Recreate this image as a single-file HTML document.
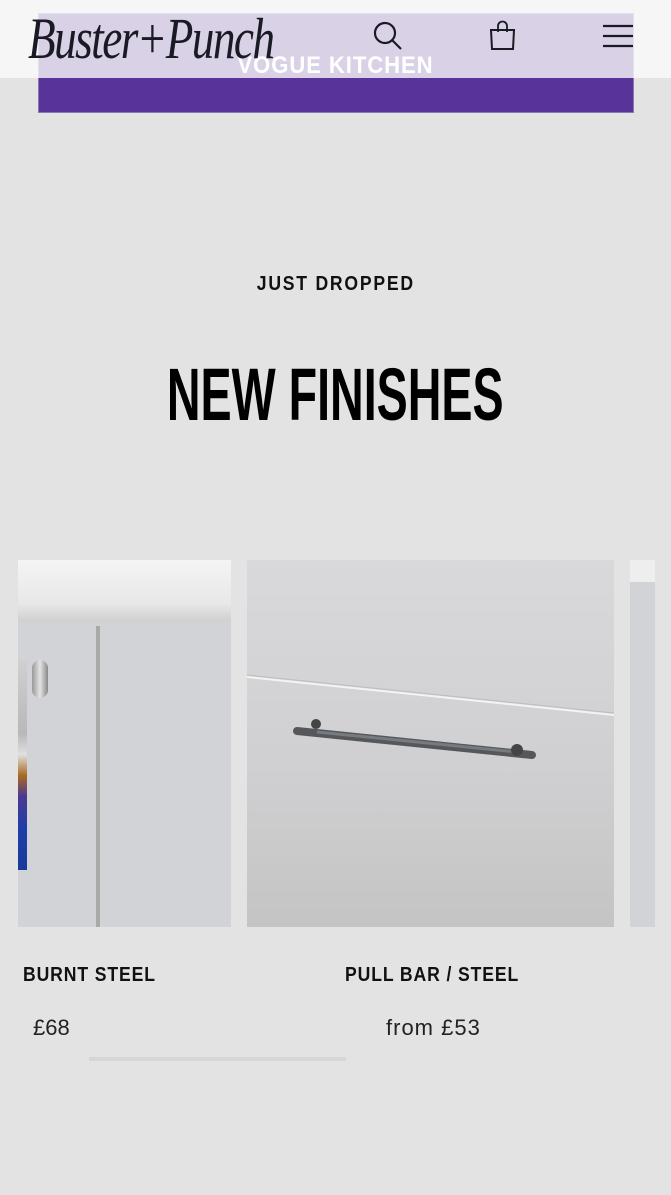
<!DOCTYPE html>
<html><head><meta charset="utf-8"><style>
*{margin:0;padding:0;box-sizing:border-box}
body{width:671px;height:1195px;overflow:hidden;background:#e3e3e3;font-family:"Liberation Sans",sans-serif;position:relative}
.abs{position:absolute}
</style></head><body>
<div class="abs" style="left:38px;top:13px;width:596px;height:100px;background:#58339a;border:1px solid #8a76b8"></div>
<div class="abs" style="left:0;top:0;width:671px;height:78px;background:rgba(250,250,250,0.8)"></div>
<div class="abs" style="left:0;top:52px;width:671px;text-align:center;color:#fff;font-weight:bold;font-size:24px;letter-spacing:1px"><span style="display:inline-block;transform:scaleX(0.92)">VOGUE KITCHEN</span></div>
<div class="abs" style="left:28px;top:4px;font-family:'Liberation Serif',serif;font-style:italic;font-size:58px;color:#1a1a24;transform:scaleX(0.78);transform-origin:left;letter-spacing:-2px;line-height:70px">Buster+Punch</div>
<svg class="abs" style="left:372px;top:20px" width="32" height="32" viewBox="0 0 32 32"><circle cx="13" cy="13" r="10" fill="none" stroke="#1a1a24" stroke-width="2.2"/><line x1="20" y1="20" x2="29" y2="29" stroke="#1a1a24" stroke-width="2.2"/></svg>
<svg class="abs" style="left:488px;top:20px" width="30" height="32" viewBox="0 0 30 32"><path d="M3 10H26L25 29H4Z" fill="none" stroke="#1a1a24" stroke-width="2"/><path d="M10 12V6a4.5 4.5 0 0 1 9 0V12" fill="none" stroke="#1a1a24" stroke-width="1.8"/></svg>
<svg class="abs" style="left:602px;top:24px" width="32" height="24" viewBox="0 0 32 24"><g stroke="#1a1a24" stroke-width="2.2"><line x1="1" y1="2" x2="31" y2="2"/><line x1="1" y1="12" x2="31" y2="12"/><line x1="1" y1="22" x2="31" y2="22"/></g></svg>
<div class="abs" style="left:0;top:273px;width:671px;text-align:center;font-size:20px;letter-spacing:2px;color:#111;font-weight:bold"><span style="display:inline-block;transform:scaleX(0.88)">JUST DROPPED</span></div>
<div class="abs" style="left:0;top:352px;width:671px;text-align:center"><span style="display:inline-block;font-weight:bold;font-size:74px;color:#000;transform:scaleX(0.63)">NEW FINISHES</span></div>
<!-- card 1 -->
<div class="abs" style="left:18px;top:560px;width:213px;height:367px;background:#d2d3d7;overflow:hidden">
<div class="abs" style="left:0;top:0;width:213px;height:62px;background:linear-gradient(#f4f4f4,#e8e8e8 70%,#cfcfcf)"></div>
<div class="abs" style="left:78px;top:66px;width:4px;height:301px;background:#a9a9a7"></div>
<div class="abs" style="left:14px;top:100px;width:16px;height:38px;border-radius:8px;background:linear-gradient(90deg,#999,#e4e4e4,#888)"></div>
<div class="abs" style="left:0;top:100px;width:9px;height:210px;background:linear-gradient(#d0d0d0 0%,#b8b8b8 35%,#e0e0e0 45%,#a86a20 55%,#4a3a90 65%,#1e3fa8 80%,#1a3a9a 100%)"></div>
</div>
<!-- card 2 -->
<div class="abs" style="left:247px;top:560px;width:367px;height:367px;background:linear-gradient(#d9d9db,#cfcfd1 60%,#c4c4c4);overflow:hidden">
<svg class="abs" style="left:0;top:0" width="367" height="367"><line x1="0" y1="117" x2="367" y2="155" stroke="#f3f3f3" stroke-width="2"/><line x1="0" y1="115" x2="367" y2="153" stroke="#bdbdbd" stroke-width="1"/>
<line x1="50" y1="171" x2="285" y2="195" stroke="#55575a" stroke-width="8" stroke-linecap="round"/><line x1="70" y1="172" x2="270" y2="192" stroke="#777a7e" stroke-width="3"/><circle cx="69" cy="164" r="5" fill="#444"/><circle cx="270" cy="190" r="6" fill="#444"/></svg>
</div>
<div class="abs" style="left:630px;top:560px;width:25px;height:367px;background:#d2d3d7"><div style="height:22px;background:#eee"></div></div>
<div class="abs" style="left:23px;top:964px;font-size:20px;letter-spacing:1px;color:#111;font-weight:bold;transform:scaleX(0.88);transform-origin:left">BURNT STEEL</div>
<div class="abs" style="left:345px;top:964px;font-size:20px;letter-spacing:1px;color:#111;font-weight:bold;transform:scaleX(0.88);transform-origin:left">PULL BAR / STEEL</div>
<div class="abs" style="left:33px;top:1015px;font-size:22px;color:#222">£68</div>
<div class="abs" style="left:386px;top:1015px;font-size:22px;color:#222;letter-spacing:1px">from £53</div>
<div class="abs" style="left:89px;top:1057px;width:257px;height:4px;background:#d6d6d6"></div>
</body></html>
